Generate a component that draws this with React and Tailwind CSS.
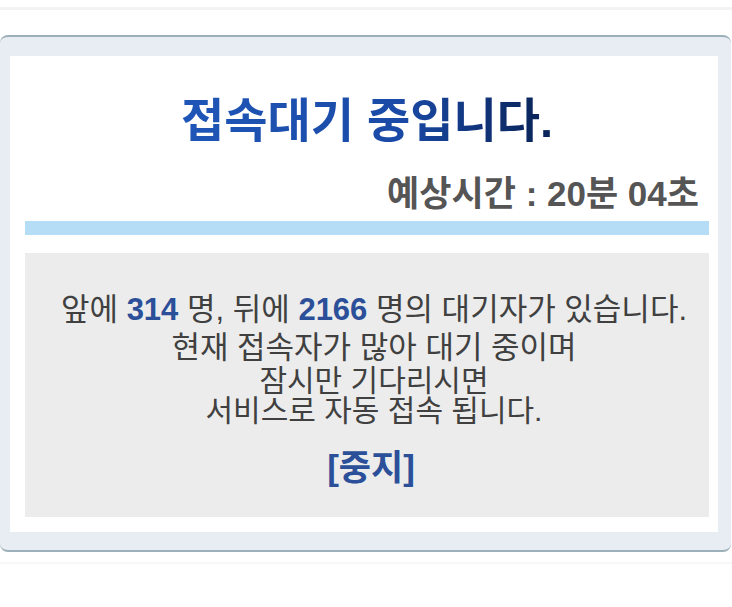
export default function App() {
  return (
    <div
      className="w-[732px] h-[607px] bg-white overflow-hidden"
      style={{ fontFamily: '"Liberation Sans", "Noto Sans CJK KR", sans-serif' }}
    >
      <div className="h-[7px]"></div>
      <div className="h-[3px] bg-[#f3f3f4]"></div>
      <div className="h-[25px]"></div>

      <section className="w-[731px] rounded-lg border-t-2 border-b-2 border-[#9cb0b9] bg-[#e8edf3] pl-[10px] pr-[13px] pt-[19px] pb-[18px]">
        <div className="bg-white pl-[15px] pr-[9px] pt-[37px] pb-[15px]">
          <h1 className="text-center text-[47px] leading-[56px] font-bold bg-gradient-to-r from-[#1f55b6] from-25% via-[#1a4aa6] via-55% to-[#0a255c] to-75% bg-clip-text text-transparent">
            접속대기 중입니다.
          </h1>
          <p className="mt-[25px] pr-[10px] text-right text-[35px] leading-[40px] font-bold text-[#555555]">
            예상시간 : 20분 04초
          </p>
          <div className="mt-[7px] h-[14px] bg-[#b6ddf6]"></div>

          <div className="mt-[18px] h-[264px] bg-[#ececec] pl-[14px] pt-[37px] text-center text-[#404040]">
            <p className="text-[31px] leading-[40px]">
              앞에 <b className="text-[#2b4f98]">314</b> 명, 뒤에{" "}
              <b className="text-[#2b4f98]">2166</b> 명의 대기자가 있습니다.
            </p>
            <p className="text-[31px] leading-[36px]">현재 접속자가 많아 대기 중이며</p>
            <p className="text-[30px] leading-[30px]">잠시만 기다리시면</p>
            <p className="text-[30px] leading-[30px]">서비스로 자동 접속 됩니다.</p>
            <button className="block mx-auto mt-[22px] pr-[6px] text-[35px] leading-[40px] font-bold text-[#2b4f98]">
              [중지]
            </button>
          </div>
        </div>
      </section>

      <div className="h-[10px]"></div>
      <div className="h-[2px] bg-[#f7f7f7]"></div>
    </div>
  );
}
